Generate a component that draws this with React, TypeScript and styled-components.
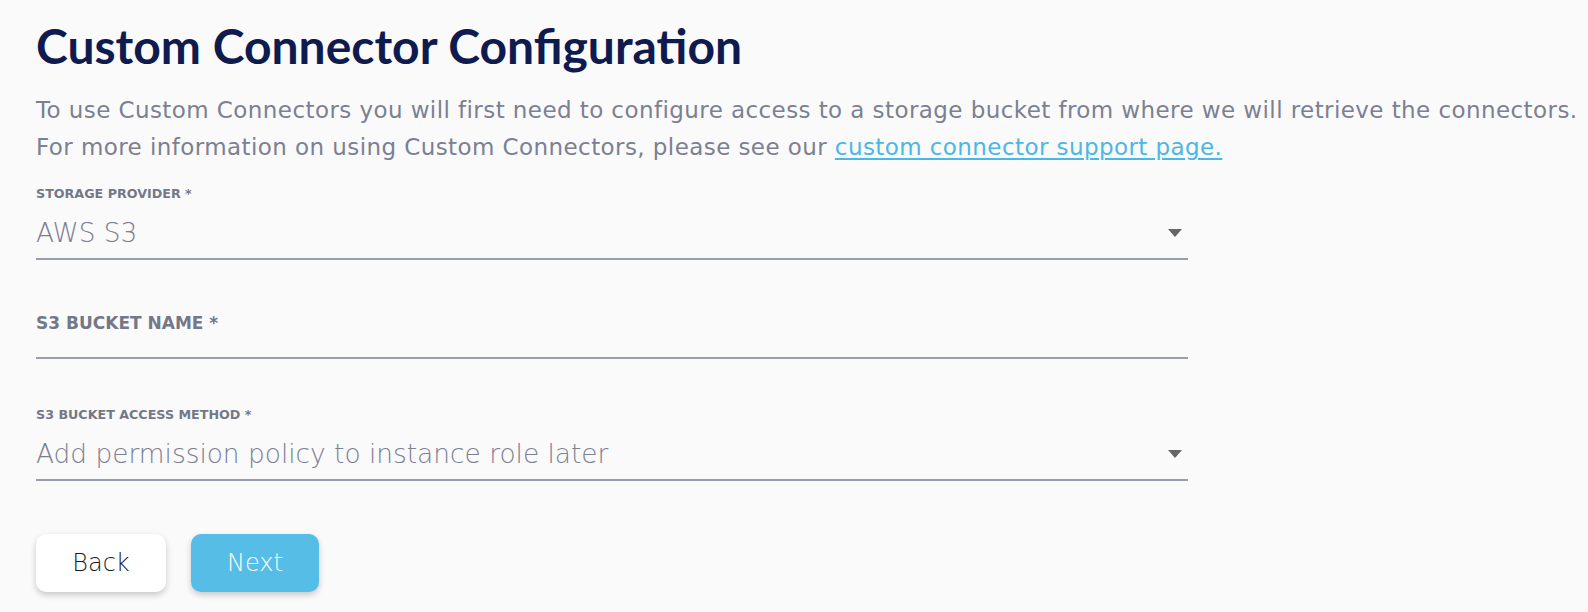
import React from 'react';
import styled, { createGlobalStyle } from 'styled-components';

const GlobalStyle = createGlobalStyle`
  html, body {
    margin: 0;
    padding: 0;
    background: #fafafb;
  }
  * {
    box-sizing: border-box;
  }
`;

const FONT = `"DejaVu Sans", "Open Sans", sans-serif`;
const TITLE_FONT = `Lato, "DejaVu Sans", sans-serif`;

export interface IFieldProps {
    label: string;
    labelSize?: 'small' | 'large';
    value?: string;
    select?: boolean;
}

const Field: React.FC<IFieldProps & { className?: string }> = ({
    label,
    labelSize = 'small',
    value,
    select,
    className
}) => {
    return (
        <FieldWrap className={className}>
            <Label size={labelSize}>{label}</Label>
            <Control select={select}>
                <Value>{value}</Value>
                {select && <Caret />}
            </Control>
        </FieldWrap>
    );
};

export default function App() {
    return (
        <>
            <GlobalStyle />
            <Page>
                <Title>Custom Connector Configuration</Title>
                <Intro>
                    To use Custom Connectors you will first need to configure access to a storage bucket from where we will retrieve the connectors.
                    <br />
                    For more information on using Custom Connectors, please see our{' '}
                    <SupportLink href="#">custom connector support page.</SupportLink>
                </Intro>

                <Form>
                    <ProviderField label="STORAGE PROVIDER *" value="AWS S3" select />
                    <BucketField label="S3 BUCKET NAME *" labelSize="large" />
                    <MethodField
                        label="S3 BUCKET ACCESS METHOD *"
                        value="Add permission policy to instance role later"
                        select
                    />
                </Form>

                <Actions>
                    <Button>Back</Button>
                    <Button primary>Next</Button>
                </Actions>
            </Page>
        </>
    );
}

const Page = styled.main`
   min-height: 612px;
   padding: 18px 0 0 36px;
   background: #fafafb;
   font-family: ${FONT};
   `;

const Title = styled.h1`
   margin: 0;
   font-family: ${TITLE_FONT};
   font-size: 48px;
   line-height: 56px;
   font-weight: bold;
   color: #0f1a4f;
   `;

const Intro = styled.p`
   margin: 18px 0 0 0;
   font-size: 23px;
   line-height: 37px;
   letter-spacing: 0.42px;
   color: #7b8092;
   `;

const SupportLink = styled.a`
   color: #4bb7e5;
   text-decoration: underline;
   text-underline-offset: 3px;
   `;

const Form = styled.div`
   width: 1152px;
   display: flex;
   flex-direction: column;
   margin-top: 20px;
   `;

const FieldWrap = styled.div`
   display: flex;
   flex-direction: column;
   `;

const ProviderField = styled(Field)`
   margin-top: 0;
   `;

const BucketField = styled(Field)`
   margin-top: 53px;
   `;

const MethodField = styled(Field)`
   margin-top: 48px;
   `;

const Label = styled.label<{ size: 'small' | 'large' }>`
   font-size: ${({ size }) => (size === 'large' ? '17px' : '12.7px')};
   line-height: ${({ size }) => (size === 'large' ? '20px' : '16px')};
   font-weight: bold;
   color: #737888;
   `;

const Control = styled.div<{ select?: boolean }>`
   display: flex;
   align-items: center;
   justify-content: space-between;
   height: ${({ select }) => (select ? '58px' : '26px')};
   padding: ${({ select }) => (select ? '14px 6px 8px 0' : '0')};
   border-bottom: 2px solid #9a9eac;
   `;

const Value = styled.span`
   font-size: 26.4px;
   line-height: 32px;
   font-weight: 200;
   color: #7b8092;
   `;

const Caret = styled.span`
   width: 0;
   height: 0;
   border-left: 7px solid transparent;
   border-right: 7px solid transparent;
   border-top: 8px solid #666666;
   `;

const Actions = styled.div`
   display: flex;
   gap: 25px;
   margin-top: 53px;
   `;

const Button = styled.button<{ primary?: boolean }>`
   width: ${({ primary }) => (primary ? '128px' : '130px')};
   height: 58px;
   border: none;
   border-radius: 10px;
   font-family: ${FONT};
   font-size: 24px;
   font-weight: 300;
   color: ${({ primary }) => (primary ? '#ffffff' : '#1a1a1e')};
   background: ${({ primary }) => (primary ? '#55bde6' : '#ffffff')};
   box-shadow: 0 3px 6px rgba(0, 0, 0, 0.2);
   cursor: pointer;
   `;
